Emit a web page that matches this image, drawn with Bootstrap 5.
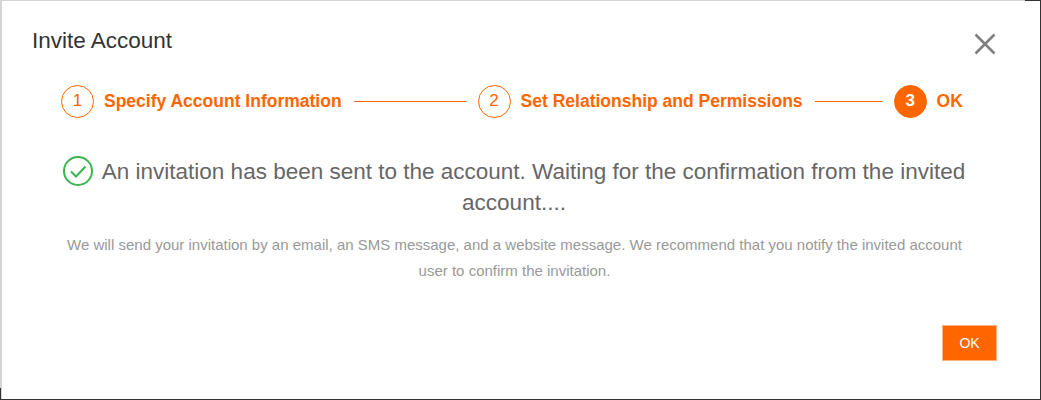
<!DOCTYPE html>
<html lang="en">
<head>
<meta charset="utf-8">
<link href="https://cdn.jsdelivr.net/npm/bootstrap@5.3.0/dist/css/bootstrap.min.css" rel="stylesheet">
<style>
html,body{height:400px;overflow:hidden;background:#fff;}
body{font-family:"Liberation Sans",Arial,sans-serif;}
.dlg{position:relative;height:400px;width:1041px;border:1px solid #333;border-width:0 1px 1px 0;box-shadow:inset 2px 1px 0 #d4d4d4;padding:0 43px 0 32px;}
.dlg::before{content:"";position:absolute;top:0;right:0;width:15px;height:1px;background:#333;}
.dlg::after{content:"";position:absolute;left:0;bottom:0;width:1px;height:11px;background:#333;}
.dlg-title{font-size:22.500px;line-height:26px;color:#333;padding-top:28px;}
.dlg-x{padding:0;border:0;background:none;line-height:0;margin:33px 1px 0 0;}
.steps{padding:0 0 0 29px;margin-top:28px;height:36px;}
.num{width:33px;height:33px;border:1px solid #f60;border-radius:50%;color:#f60;font-size:17px;flex:none;}
.num-on{background:#f60;color:#fff;font-weight:700;}
.lbl{color:#f60;font-weight:700;font-size:17.500px;margin-left:10px;white-space:nowrap;}
.ln{height:2px;border-bottom:1px solid #f60;width:112px;margin:0 12px;flex:none;}
.ln-short{width:67px;}
.msg{font-size:22.500px;line-height:31px;color:#666;text-align:center;margin:37px 0 0 -1px;}
.msg svg{vertical-align:-7px;margin-right:9px;}
.note{font-size:15px;line-height:26px;color:#999;text-align:center;margin-top:14px;padding:0 20px;}
.okb{background:#f60;color:#fff;border:1px solid #ffb27f;border-radius:0;width:55px;height:36px;font-size:14px;padding:0;}
.foot{margin-top:41px;}
</style>
</head>
<body>
<div class="dlg">
  <div class="d-flex justify-content-between align-items-start">
    <div class="dlg-title">Invite Account</div>
    <button class="dlg-x" type="button" aria-label="Close"><svg width="22" height="22" viewBox="0 0 22 22"><path d="M1.500 1.500 20.500 20.500M20.500 1.500 1.500 20.500" stroke="#808080" stroke-width="2.600" fill="none"/></svg></button>
  </div>
  <div class="steps d-flex align-items-center">
    <span class="num d-flex align-items-center justify-content-center">1</span>
    <span class="lbl">Specify Account Information</span>
    <span class="ln"></span>
    <span class="num d-flex align-items-center justify-content-center">2</span>
    <span class="lbl">Set Relationship and Permissions</span>
    <span class="ln ln-short"></span>
    <span class="num num-on d-flex align-items-center justify-content-center">3</span>
    <span class="lbl">OK</span>
  </div>
  <p class="msg mb-0"><svg width="30" height="30" viewBox="0 0 30 30"><circle cx="15" cy="15" r="14" fill="none" stroke="#3cb450" stroke-width="2"/><path d="M8 15.500 13 20.500 22.500 10.500" fill="none" stroke="#3cb450" stroke-width="2"/></svg>An invitation has been sent to the account. Waiting for the confirmation from the invited account....</p>
  <p class="note mb-0">We will send your invitation by an email, an SMS message, and a website message. We recommend that you notify the invited account user to confirm the invitation.</p>
  <div class="foot d-flex justify-content-end"><button class="btn okb" type="button">OK</button></div>
</div>
<script src="https://cdn.jsdelivr.net/npm/bootstrap@5.3.0/dist/js/bootstrap.bundle.min.js"></script>
</body>
</html>
